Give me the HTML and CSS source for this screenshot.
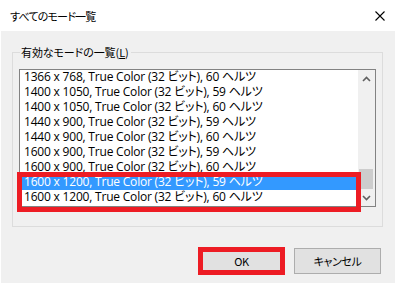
FILE: index.html
```html
<!DOCTYPE html>
<html lang="ja">
<head>
<meta charset="utf-8">
<link rel="stylesheet" href="styles.css">
</head>
<body>
<div class="window">
  <div class="titlebar">
    <span class="title">すべてのモード一覧</span>
    <svg class="close" width="10" height="10" viewBox="0 0 10 10"><path d="M0.5 0.5 L9.5 9.5 M9.5 0.5 L0.5 9.5" stroke="#000" stroke-width="1.1" fill="none"/></svg>
  </div>
  <div class="content">
    <div class="group">
      <div class="legend">有効なモードの一覧(<u>L</u>)</div>
      <div class="list">
        <div class="rows">
          <div class="row">1366 x 768, True Color (32 ビット), 60 ヘルツ</div>
          <div class="row">1400 x 1050, True Color (32 ビット), 59 ヘルツ</div>
          <div class="row">1400 x 1050, True Color (32 ビット), 60 ヘルツ</div>
          <div class="row">1440 x 900, True Color (32 ビット), 59 ヘルツ</div>
          <div class="row">1440 x 900, True Color (32 ビット), 60 ヘルツ</div>
          <div class="row">1600 x 900, True Color (32 ビット), 59 ヘルツ</div>
          <div class="row">1600 x 900, True Color (32 ビット), 60 ヘルツ</div>
          <div class="row selected">1600 x 1200, True Color (32 ビット), 59 ヘルツ</div>
          <div class="row">1600 x 1200, True Color (32 ビット), 60 ヘルツ</div>
        </div>
        <div class="scrollbar">
          <div class="arrow"><svg width="9" height="6" viewBox="0 0 9 6"><path d="M1 5 L4.5 1.5 L8 5" stroke="#606060" stroke-width="1.6" fill="none"/></svg></div>
          <div class="track"><div class="thumb"></div></div>
          <div class="arrow"><svg width="9" height="6" viewBox="0 0 9 6"><path d="M1 1 L4.5 4.5 L8 1" stroke="#606060" stroke-width="1.6" fill="none"/></svg></div>
        </div>
        <div class="mark"></div>
      </div>
    </div>
    <div class="buttons">
      <button class="btn ok">OK</button>
      <button class="btn">キャンセル</button>
    </div>
  </div>
</div>
</body>
</html>
```
FILE: styles.css
```css
* { box-sizing: border-box; }
html, body { margin: 0; padding: 0; background: #fff; }
body {
  font-family: "Open Sans", "Noto Sans CJK JP", sans-serif;
  font-size: 12px;
  color: #000;
}
.window {
  width: 396px;
  height: 285px;
  background: #fff;
  padding: 0 1px 2px 1px;
  display: flex;
  flex-direction: column;
}
.titlebar {
  height: 31px;
  display: flex;
  align-items: center;
  justify-content: space-between;
  padding: 0 10px 0 9px;
}
.title {
  font-family: "Noto Sans CJK JP", sans-serif;
  font-feature-settings: "palt";
  font-size: 11px;
  letter-spacing: -0.8px;
  line-height: 15px;
  color: #000;
  margin-top: 1px;
}
.close { display: block; }
.content {
  flex: 1;
  background: #f0f0f0;
  display: flex;
  flex-direction: column;
}
.group {
  margin: 21px 12px 0 11px;
  border: 1px solid #dcdcdc;
  padding: 0 6px 19px 6px;
  display: flex;
  flex-direction: column;
}
.legend {
  align-self: flex-start;
  margin: -8px 0 0 1px;
  padding: 0 2px 0 1px;
  background: #f0f0f0;
  height: 15px;
  line-height: 15px;
  font-family: "Noto Sans CJK JP", sans-serif;
  font-feature-settings: "palt";
  font-size: 11px;
  letter-spacing: -0.1px;
}
.legend u { text-underline-offset: 1px; }
.list {
  position: relative;
  margin-top: 9px;
  height: 138px;
  border: 1px solid #828282;
  background: #fff;
  display: flex;
}
.rows {
  flex: 1;
  display: flex;
  flex-direction: column;
}
.row {
  height: 15px;
  line-height: 14px;
  padding-left: 4px;
  white-space: nowrap;
  letter-spacing: -0.2px;
  font-feature-settings: "palt";
}
.row.selected { background: #3399ff; color: #fff; }
.scrollbar {
  width: 17px;
  background: #f0f0f0;
  display: flex;
  flex-direction: column;
}
.arrow {
  height: 17px;
  display: flex;
  align-items: center;
  justify-content: center;
}
.arrow svg { display: block; }
.track {
  flex: 1;
  display: flex;
  flex-direction: column;
}
.thumb {
  margin: 82px 2px 0 1px;
  height: 20px;
  background: #cdcdcd;
}
.mark {
  position: absolute;
  left: -3px;
  top: 102px;
  width: 344px;
  height: 40px;
  border: 5px solid #ed1c24;
}
.buttons {
  display: flex;
  justify-content: flex-end;
  gap: 9px;
  margin: 21px 14px 0 0;
}
.btn {
  position: relative;
  width: 87px;
  height: 26px;
  border: 1px solid #adadad;
  background: #e1e1e1;
  font-family: "Noto Sans CJK JP", sans-serif;
  font-feature-settings: "palt";
  font-size: 11px;
  letter-spacing: -0.4px;
  color: #000;
  padding: 0;
}
.ok::after {
  content: "";
  position: absolute;
  left: -1px;
  right: -1px;
  top: -2px;
  bottom: -2px;
  border: 5px solid #ed1c24;
}
```
